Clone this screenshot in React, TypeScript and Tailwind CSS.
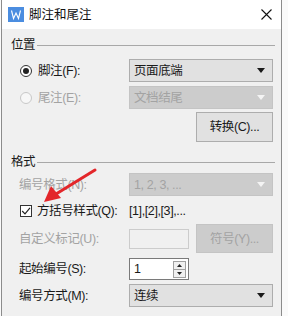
import React from 'react';

const font = { fontFamily: '"Liberation Sans", "Noto Sans CJK SC", sans-serif' };

const Caret = ({ disabled }: { disabled?: boolean }) => (
  <svg width="8" height="5" viewBox="0 0 8 5" className="shrink-0">
    <path d="M0 0 L8 0 L4 5 Z" fill={disabled ? '#f4f4f4' : '#1a1a1a'} />
  </svg>
);

const Select = ({ value, disabled }: { value: string; disabled?: boolean }) => (
  <div
    className={`w-[144px] h-[23px] flex items-center justify-between pl-[4px] pr-[7px] border ${
      disabled ? 'bg-[#cccccc] border-[#c4c4c4] text-[#a3a3a3]' : 'bg-[#e1e1e1] border-[#adadad] text-[#1a1a1a]'
    }`}
  >
    <span>{value}</span>
    <Caret disabled={disabled} />
  </div>
);

const Group = ({ title }: { title: string }) => (
  <div className="flex items-center h-[16px] pl-[9px] pr-[6px]">
    <span className="text-[#1a1a1a]">{title}</span>
    <div className="flex-1 h-px bg-[#a8a8a8] ml-[2px]" />
  </div>
);

export default function App() {
  return (
    <div className="w-[288px] h-[316px] bg-[#fafafa] overflow-hidden relative text-[12.5px] leading-[16px] tracking-[-0.4px]" style={font}>
      <div className="ml-[1px] w-[281px] h-full border-x border-[#8c8c8c] bg-[#f0f0f0] flex flex-col">
        {/* title bar */}
        <div className="h-[29px] bg-white flex items-center pl-[6px] pr-[9px]">
          <svg width="16" height="15" viewBox="0 0 16 15">
            <rect width="16" height="15" fill="#4b8de0" />
            <path d="M3.5 3.5 L5.5 11.5 L8 6 L10.5 11.5 L12.5 3.5" stroke="#fff" strokeWidth="1.1" fill="none" />
          </svg>
          <span className="ml-[5px] text-[12.5px] tracking-normal text-[#111]">脚注和尾注</span>
          <div className="flex-1" />
          <svg width="11" height="11" viewBox="0 0 11 11">
            <path d="M0.5 0.5 L10.5 10.5 M10.5 0.5 L0.5 10.5" stroke="#111" strokeWidth="1.1" />
          </svg>
        </div>

        {/* 位置 */}
        <div className="mt-[8px]">
          <Group title="位置" />
        </div>
        <div className="mt-[6px] flex items-center h-[23px] pl-[18px]">
          <div className="w-[12px] h-[12px] rounded-full border border-[#333] bg-white flex items-center justify-center">
            <div className="w-[6px] h-[6px] rounded-full bg-[#222]" />
          </div>
          <span className="ml-[6px] w-[91px] text-[#1a1a1a]">脚注(F):</span>
          <Select value="页面底端" />
        </div>
        <div className="mt-[4px] flex items-center h-[23px] pl-[18px]">
          <div className="w-[12px] h-[12px] rounded-full border border-[#c8c8c8] bg-[#f7f7f7]" />
          <span className="ml-[6px] w-[91px] text-[#a3a3a3]">尾注(E):</span>
          <Select value="文档结尾" disabled />
        </div>
        <div className="mt-[3px] flex justify-end pr-[8px]">
          <div className="w-[77px] h-[30px] bg-[#e1e1e1] border border-[#adadad] flex items-center justify-center text-[#1a1a1a]">
            转换(C)...
          </div>
        </div>

        {/* 格式 */}
        <div className="mt-[12px]">
          <Group title="格式" />
        </div>
        <div className="mt-[3px] flex items-center h-[23px] pl-[17px]">
          <span className="w-[110px] text-[#a3a3a3]">编号格式(N):</span>
          <Select value="1, 2, 3, ..." disabled />
        </div>
        <div className="mt-[5px] flex items-center h-[20px] pl-[18px]">
          <div className="w-[12px] h-[12px] border border-[#333] bg-white flex items-center justify-center">
            <svg width="10" height="10" viewBox="0 0 10 10">
              <path d="M1.2 5 L4 7.8 L9 1.8" stroke="#222" strokeWidth="1.2" fill="none" />
            </svg>
          </div>
          <span className="ml-[5px] w-[92px] whitespace-nowrap text-[#1a1a1a]">方括号样式(Q):</span>
          <span className="text-[#1a1a1a]">[1],[2],[3],...</span>
        </div>
        <div className="mt-[3px] flex items-center h-[29px] pl-[17px]">
          <span className="w-[110px] text-[#a3a3a3]">自定义标记(U):</span>
          <div className="w-[60px] h-[20px] border border-[#cccccc] bg-[#f0f0f0]" />
          <div className="ml-[7px] w-[77px] h-[29px] bg-[#cccccc] border border-[#c4c4c4] flex items-center justify-center text-[#a3a3a3]">
            符号(Y)...
          </div>
        </div>
        <div className="mt-[5px] flex items-center h-[22px] pl-[17px]">
          <span className="w-[110px] text-[#1a1a1a]">起始编号(S):</span>
          <div className="w-[60px] h-[22px] border border-[#7a7a7a] bg-white flex items-center pl-[4px] pr-[2px]">
            <span className="flex-1 text-[#1a1a1a]">1</span>
            <div className="w-[13px] h-[17px] flex flex-col">
              <div className="h-[9px] border border-[#a0a0a0] bg-[#f0f0f0] flex items-center justify-center">
                <svg width="5" height="3" viewBox="0 0 5 3"><path d="M0 3 L5 3 L2.5 0 Z" fill="#222" /></svg>
              </div>
              <div className="h-[8px] border border-t-0 border-[#a0a0a0] bg-[#f0f0f0] flex items-center justify-center">
                <svg width="5" height="3" viewBox="0 0 5 3"><path d="M0 0 L5 0 L2.5 3 Z" fill="#222" /></svg>
              </div>
            </div>
          </div>
        </div>
        <div className="mt-[4px] flex items-center h-[23px] pl-[17px]">
          <span className="w-[110px] text-[#1a1a1a]">编号方式(M):</span>
          <Select value="连续" />
        </div>
      </div>

      {/* annotation arrow */}
      <svg className="absolute left-0 top-0 pointer-events-none" width="288" height="316" viewBox="0 0 288 316">
        <path d="M95 170 L56 194" stroke="#e3262a" strokeWidth="3" strokeLinecap="round" />
        <path d="M44 202 L51 186 L61 198 Z" fill="#e3262a" />
      </svg>
    </div>
  );
}
